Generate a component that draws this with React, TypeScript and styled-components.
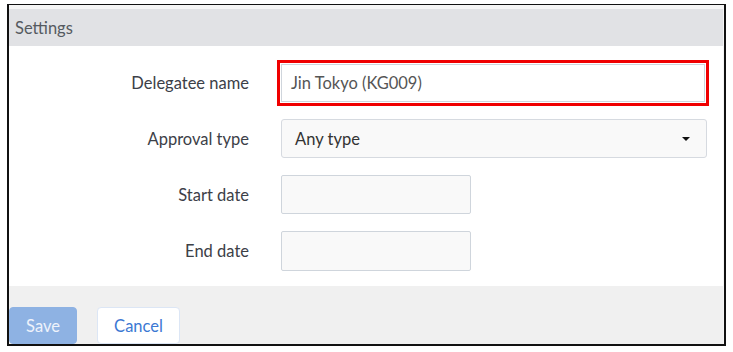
import React from "react";
import styled, { createGlobalStyle } from "styled-components";

const Global = createGlobalStyle`
  html, body { margin: 0; padding: 0; background: #ffffff; }
  body { font-family: "Lato", "Open Sans", Arial, sans-serif; }
  * { box-sizing: border-box; }
`;

const Frame = styled.div`
  margin: 4px 0 0 7px;
  width: 719px;
  height: 342px;
  border: 2px solid #111;
  border-top-width: 1px;
  overflow: hidden;
  background: #f5f5f5;
  display: flex;
  flex-direction: column;
  padding-top: 4px;
`;

const Header = styled.div`
  height: 39px;
  margin-right: 1px;
  background: #e1e2e5;
  color: #555a60;
  font-size: 16.5px;
  display: flex;
  align-items: center;
  padding-left: 6px;
`;

const Body = styled.div`
  background: #ffffff;
  margin-right: 1px;
  padding: 18px 16px 15px 0;
  display: grid;
  grid-template-columns: 240px 1fr;
  column-gap: 32px;
  row-gap: 17px;
  align-items: center;
`;

const Label = styled.div`
  text-align: right;
  font-size: 16.5px;
  color: #3c4047;
`;

const Field = styled.div<{ $w?: number; $h?: number }>`
  height: ${(p) => p.$h ?? 39}px;
  width: ${(p) => (p.$w ? `${p.$w}px` : "100%")};
  border: 1px solid #cfd5dc;
  border-radius: 2px;
  background: #f9f9f9;
  display: flex;
  align-items: center;
  font-size: 16.5px;
`;

const HighlightField = styled(Field)`
  background: #ffffff;
  color: #555;
  padding-left: 9px;
  width: 424px;
  border-radius: 0;
  outline: 3px solid #f00000;
  outline-offset: 1px;
`;

const SelectField = styled(Field)`
  justify-content: space-between;
  padding: 0 16px 0 13px;
  color: #333;
  border-color: #d6dae0;
  border-radius: 3px;
`;

const Caret = styled.span`
  width: 0;
  height: 0;
  border-left: 4px solid transparent;
  border-right: 4px solid transparent;
  border-top: 4px solid #111;
`;

const Footer = styled.div`
  flex: 1;
  background: #f0f0f0;
  margin-right: 1px;
  padding: 21px 0 0 0;
  display: flex;
  gap: 20px;
  align-items: flex-start;
`;

const Button = styled.button<{ $primary?: boolean }>`
  height: 37px;
  border-radius: 4px;
  font-family: inherit;
  font-size: 16.5px;
  padding: 0;
  border: 1px solid ${(p) => (p.$primary ? "#8eb2e3" : "#dce6f5")};
  background: ${(p) => (p.$primary ? "#8eb2e3" : "#ffffff")};
  color: ${(p) => (p.$primary ? "#eef3fb" : "#3c78d3")};
  width: ${(p) => (p.$primary ? 68 : 83)}px;
`;

export default function App() {
  return (
    <>
      <Global />
      <Frame>
        <Header>Settings</Header>
        <Body>
          <Label>Delegatee name</Label>
          <HighlightField $h={38}>Jin Tokyo (KG009)</HighlightField>
          <Label>Approval type</Label>
          <SelectField>
            <span>Any type</span>
            <Caret />
          </SelectField>
          <Label>Start date</Label>
          <Field $w={190} />
          <Label>End date</Label>
          <Field $w={190} $h={40} />
        </Body>
        <Footer>
          <Button $primary>Save</Button>
          <Button>Cancel</Button>
        </Footer>
      </Frame>
    </>
  );
}
